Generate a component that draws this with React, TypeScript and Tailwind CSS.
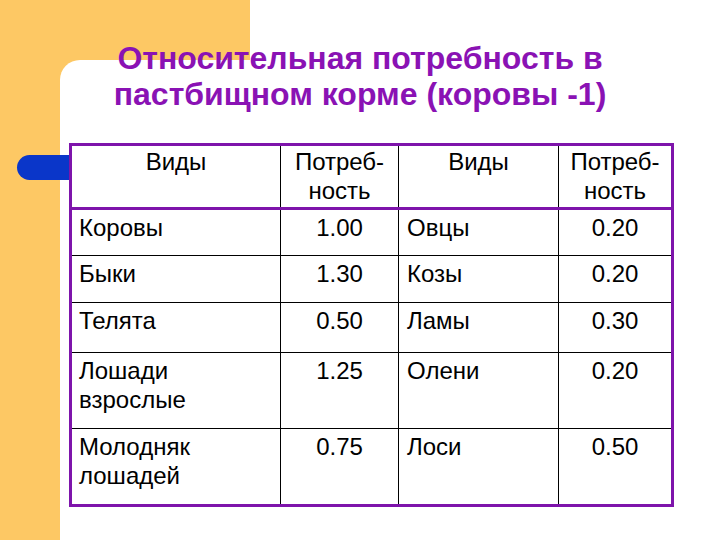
const rows: { a: string[]; av: string; b: string; bv: string }[] = [
  { a: ["Коровы"], av: "1.00", b: "Овцы", bv: "0.20" },
  { a: ["Быки"], av: "1.30", b: "Козы", bv: "0.20" },
  { a: ["Телята"], av: "0.50", b: "Ламы", bv: "0.30" },
  { a: ["Лошади", "взрослые"], av: "1.25", b: "Олени", bv: "0.20" },
  { a: ["Молодняк", "лошадей"], av: "0.75", b: "Лоси", bv: "0.50" },
];

const rowH = ["h-[47px]", "h-[47px]", "h-[50px]", "h-[76px]", "h-[77px]"];

export default function App() {
  return (
    <div
      className="relative w-[720px] h-[540px] overflow-hidden bg-white"
      style={{ fontFamily: '"Liberation Sans", Arial, sans-serif' }}
    >
      {/* yellow L-shaped backdrop with the white panel's rounded corner */}
      <div className="absolute left-0 top-0 w-[250px] h-[100px] bg-[#fdc864]" />
      <div className="absolute left-0 top-0 w-[100px] h-[540px] bg-[#fdc864]" />
      <div className="absolute left-[60px] top-[60px] w-[660px] h-[480px] bg-white rounded-tl-[20px]" />
      {/* blue tab */}
      <div className="absolute left-[17px] top-[155px] w-[60px] h-[25px] rounded-l-full bg-[#0a36c9]" />

      <div className="relative flex flex-col pt-[40px]">
        <h1 className="text-center text-[32px] leading-[36px] font-bold text-[#8a12b4]">
          Относительная потребность в
          <br />
          пастбищном корме (коровы -1)
        </h1>

        <table className="ml-[69px] mt-[31px] w-[602px] table-fixed border-collapse border-[3px] border-[#7e14ab] bg-white text-[24px] leading-[29px] text-black">
          <colgroup>
            <col className="w-[210px]" />
            <col className="w-[118px]" />
            <col className="w-[160px]" />
            <col className="w-[114px]" />
          </colgroup>
          <thead>
            <tr className="h-[64px]">
              <th className="border border-black border-b-[3px] border-b-[#7e14ab] align-top pt-[1px] font-normal text-center">
                Виды
              </th>
              <th className="border border-black border-b-[3px] border-b-[#7e14ab] align-top pt-[1px] font-normal text-center">
                Потреб-
                <br />
                ность
              </th>
              <th className="border border-black border-b-[3px] border-b-[#7e14ab] align-top pt-[1px] font-normal text-center">
                Виды
              </th>
              <th className="border border-black border-b-[3px] border-b-[#7e14ab] align-top pt-[1px] font-normal text-center">
                Потреб-
                <br />
                ность
              </th>
            </tr>
          </thead>
          <tbody>
            {rows.map((r, i) => (
              <tr key={i} className={rowH[i]}>
                <td className="border border-black align-top pt-[3px] pl-[7px]">
                  {r.a.map((t) => (
                    <div key={t}>{t}</div>
                  ))}
                </td>
                <td className="border border-black align-top pt-[3px] text-center">{r.av}</td>
                <td className="border border-black align-top pt-[3px] pl-[8px]">{r.b}</td>
                <td className="border border-black align-top pt-[3px] text-center">{r.bv}</td>
              </tr>
            ))}
          </tbody>
        </table>
      </div>
    </div>
  );
}
